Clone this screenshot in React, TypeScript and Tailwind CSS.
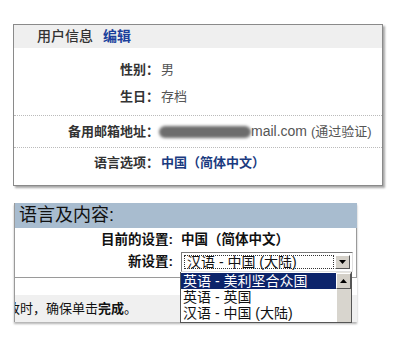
const CJK = "font-['Liberation_Sans','Noto_Sans_CJK_SC',sans-serif]";

function InfoRow({ label, children, className = "" }: { label: string; children: React.ReactNode; className?: string }) {
  return (
    <div className={`flex items-center ${className}`}>
      <div className="w-[145px] shrink-0 text-right font-bold text-[#333]">{label}</div>
      <div className="pl-[2px] text-[#555] whitespace-nowrap flex items-center">{children}</div>
    </div>
  );
}

function UserCard() {
  return (
    <div className="w-[370px] h-[162px] border border-[#8a8a8a] bg-white shadow-[2px_2px_2px_rgba(0,0,0,0.35)] text-[13px]">
      <div className="h-[23px] bg-[#efefef] flex items-center pl-[23px] text-[14px] gap-[10px]">
        <span className="text-[#333] font-medium">用户信息</span>
        <span className="text-[#1c3f9c] font-bold">编辑</span>
      </div>
      <div className="pt-[11px] pb-[7px] flex flex-col gap-[5px]">
        <InfoRow label="性别：" className="h-[22px]">男</InfoRow>
        <InfoRow label="生日：" className="h-[22px]">存档</InfoRow>
      </div>
      <div className="border-t border-dotted border-[#bbb]">
        <InfoRow label="备用邮箱地址：" className="h-[31px]">
          <span className="inline-block w-[92px] h-[12px] -ml-[2px] rounded-full bg-[#6d6d6d] blur-[1.5px]" />
          <span className="text-[14px]">mail.com</span>
          <span className="ml-[4px]">(通过验证)</span>
        </InfoRow>
      </div>
      <div className="border-t border-dotted border-[#bbb]">
        <InfoRow label="语言选项：" className="h-[29px]">
          <span className="font-bold text-[#1a3a80]">中国（简体中文）</span>
        </InfoRow>
      </div>
    </div>
  );
}

function Triangle({ up }: { up?: boolean }) {
  return (
    <svg width="7" height="4" viewBox="0 0 7 4">
      <path d={up ? "M0 4 L3.5 0 L7 4 Z" : "M0 0 L7 0 L3.5 4 Z"} fill="#000" />
    </svg>
  );
}

function LanguageSection() {
  const options = ["英语 - 美利坚合众国", "英语 - 英国", "汉语 - 中国 (大陆)"];
  return (
    <div className="relative ml-[14px] w-[343px]">
      <div className="border-l border-[#9a9a9a] shadow-[0_2px_2px_rgba(0,0,0,0.3)] overflow-hidden">
        <div className="h-[25px] bg-[#a8bccf] flex items-center pl-[4px] text-[18px] text-[#111]">
          语言及内容:
        </div>
        <div className="border-r border-b border-[#9a9a9a] pt-[2px] pb-[5px] text-[13.5px] text-[#111]">
          <div className="flex items-center h-[20px]">
            <div className="w-[158px] text-right font-bold">目前的设置:</div>
            <div className="pl-[8px] font-bold">中国（简体中文）</div>
          </div>
          <div className="flex items-center h-[20px] mt-[2px]">
            <div className="w-[158px] text-right font-bold">新设置:</div>
            <div className="ml-[8px] w-[172px] h-[20px] border border-[#7a7a7a] border-r-[#e0e0e0] border-b-[#e0e0e0] bg-white flex items-center p-[2px]">
              <div className="flex-1 h-full border border-dotted border-[#333] flex items-center pl-[2px] text-[14px] font-normal leading-none">
                汉语 - 中国 (大陆)
              </div>
              <div className="w-[15px] h-full ml-[1px] bg-[#d4d0c8] border border-[#fff] border-r-[#555] border-b-[#555] flex items-center justify-center">
                <Triangle />
              </div>
            </div>
          </div>
        </div>
        <div className="h-[17px] bg-white" />
        <div className="h-[27px] bg-[#f0f0f0] flex items-center -ml-[8px] text-[13px] text-[#111] whitespace-nowrap">
          改时，确保单击<span className="font-bold">完成</span>。
        </div>
      </div>
      <div className="absolute left-[166px] top-[69px] w-[172px] h-[51px] bg-white border border-[#555] border-t-0 flex text-[14px] leading-[16px]">
        <div className="flex-1 pt-[1px]">
          {options.map((o, i) => (
            <div key={o} className={`h-[16px] pl-[2px] whitespace-nowrap ${i === 0 ? "bg-[#0c246b] text-white" : "text-[#111]"}`}>
              {o}
            </div>
          ))}
        </div>
        <div className="w-[15px] bg-[#e6e4de] flex flex-col">
          <div className="h-[16px] mt-[1px] bg-[#d4d0c8] border border-[#fff] border-r-[#555] border-b-[#555] flex items-center justify-center">
            <Triangle up />
          </div>
          <div className="flex-1 bg-[#d8d5ce] border-l border-[#fff]" />
        </div>
      </div>
    </div>
  );
}

export default function App() {
  return (
    <div className={`w-[403px] h-[341px] bg-white overflow-hidden ${CJK}`}>
      <div className="pt-[24px] pl-[13px]">
        <UserCard />
      </div>
      <div className="mt-[17px]">
        <LanguageSection />
      </div>
    </div>
  );
}
